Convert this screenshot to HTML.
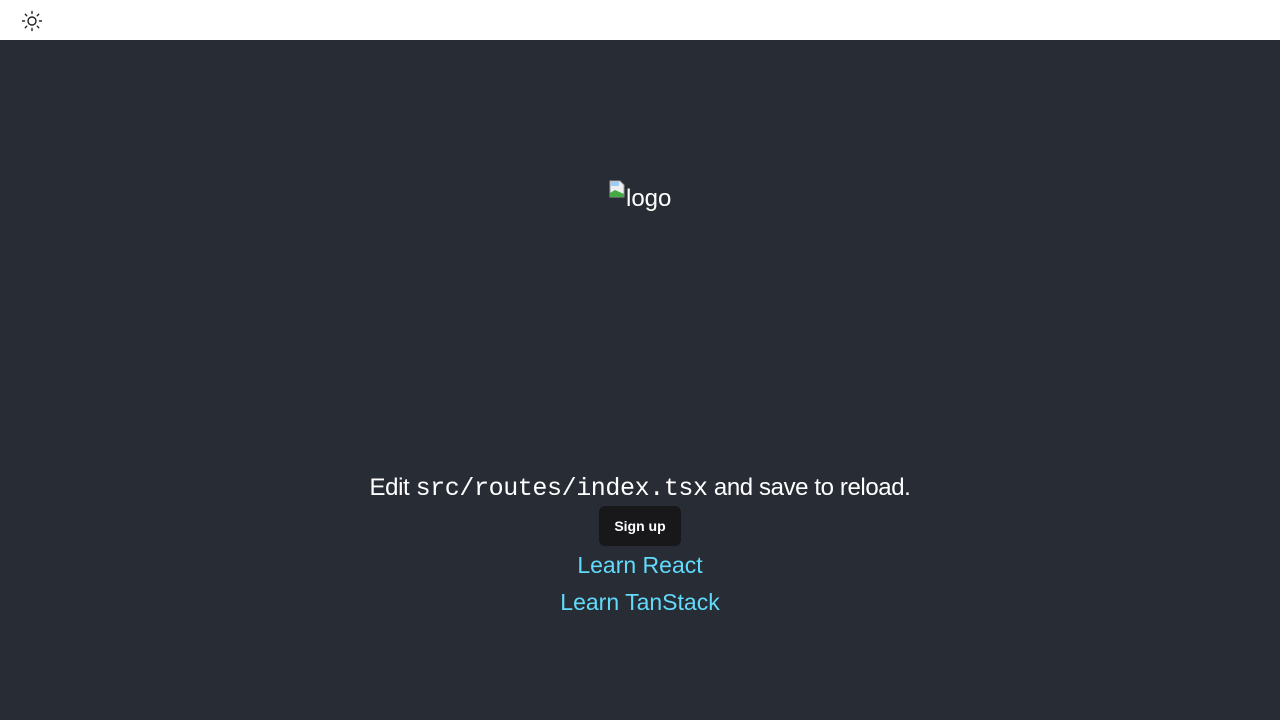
<!DOCTYPE html>
<html><head><meta charset="utf-8"><style>
html,body{margin:0;padding:0;width:1280px;height:720px;overflow:hidden;font-family:"Liberation Sans",sans-serif}
.top{height:40px;background:#fff;position:relative}
.main{position:absolute;top:40px;left:0;width:1280px;height:680px;background:#282c34;color:#fff}
.logo{position:absolute;top:140px;left:609px;font-size:24px;display:flex;align-items:flex-end}
.edit{position:absolute;top:434px;width:100%;text-align:center;font-size:24px;letter-spacing:-0.4px}
.edit code{font-family:"Liberation Mono",monospace;font-size:25px}
.btn{position:absolute;left:599px;top:466px;width:82px;height:40px;background:#18181b;border-radius:6px;font-size:14px;font-weight:bold;display:flex;align-items:center;justify-content:center}
.l{position:absolute;width:100%;text-align:center;color:#61dafb;font-size:23px}
</style></head><body>
<div class="top"><svg style="position:absolute;left:21px;top:10px" width="22" height="22" viewBox="0 0 22 22" fill="none" stroke="#222" stroke-width="1.4" stroke-linecap="round"><circle cx="11" cy="11" r="4"/><path d="M11 1.5v2M11 18.5v2M1.5 11h2M18.5 11h2M4.3 4.3l1.4 1.4M16.3 16.3l1.4 1.4M4.3 17.7l1.4-1.4M16.3 5.7l1.4-1.4"/></svg></div>
<div class="main">
<div class="logo"><svg width="16" height="18" viewBox="0 0 16 18" style="margin-bottom:14px"><path d="M1 1h10l4 4v12H1z" fill="#eee" stroke="#999"/><path d="M1 13l5-3 9 4v3H1z" fill="#4a4"/><path d="M2 2h8v4H2z" fill="#9cf"/></svg><span style="margin-left:1px;margin-bottom:-1px">logo</span></div>
<div class="edit">Edit <code>src/routes/index.tsx</code> and save to reload.</div>
<div class="btn">Sign up</div>
<div class="l" style="top:512px">Learn React</div>
<div class="l" style="top:549px">Learn TanStack</div>
</div>
</body></html>
